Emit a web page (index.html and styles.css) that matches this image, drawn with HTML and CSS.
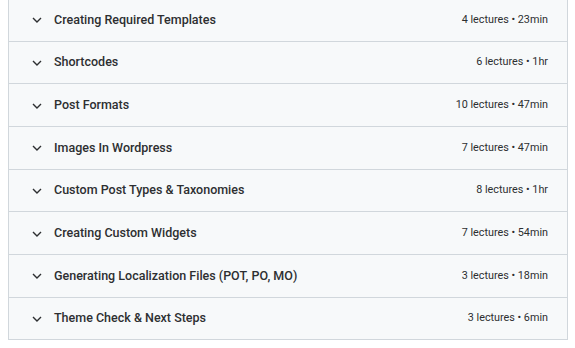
FILE: index.html
```html
<!DOCTYPE html>
<html lang="en">
<head>
    <meta charset="UTF-8">
    <meta name="viewport" content="width=device-width, initial-scale=1.0">
    <title>Course Content</title>
    <link rel="stylesheet" href="styles.css">
</head>
<body>
    <div class="curriculum">
        <div class="section">
            <div class="section-title">
                <svg class="chevron" viewBox="0 0 10 6" width="10" height="6"><path d="M1 1l4 4 4-4" fill="none" stroke="#2d2f31" stroke-width="1.4"/></svg>
                <span>Creating Required Templates</span>
            </div>
            <span class="section-meta">4 lectures • 23min</span>
        </div>
        <div class="section">
            <div class="section-title">
                <svg class="chevron" viewBox="0 0 10 6" width="10" height="6"><path d="M1 1l4 4 4-4" fill="none" stroke="#2d2f31" stroke-width="1.4"/></svg>
                <span>Shortcodes</span>
            </div>
            <span class="section-meta">6 lectures • 1hr</span>
        </div>
        <div class="section">
            <div class="section-title">
                <svg class="chevron" viewBox="0 0 10 6" width="10" height="6"><path d="M1 1l4 4 4-4" fill="none" stroke="#2d2f31" stroke-width="1.4"/></svg>
                <span>Post Formats</span>
            </div>
            <span class="section-meta">10 lectures • 47min</span>
        </div>
        <div class="section">
            <div class="section-title">
                <svg class="chevron" viewBox="0 0 10 6" width="10" height="6"><path d="M1 1l4 4 4-4" fill="none" stroke="#2d2f31" stroke-width="1.4"/></svg>
                <span>Images In Wordpress</span>
            </div>
            <span class="section-meta">7 lectures • 47min</span>
        </div>
        <div class="section">
            <div class="section-title">
                <svg class="chevron" viewBox="0 0 10 6" width="10" height="6"><path d="M1 1l4 4 4-4" fill="none" stroke="#2d2f31" stroke-width="1.4"/></svg>
                <span>Custom Post Types &amp; Taxonomies</span>
            </div>
            <span class="section-meta">8 lectures • 1hr</span>
        </div>
        <div class="section">
            <div class="section-title">
                <svg class="chevron" viewBox="0 0 10 6" width="10" height="6"><path d="M1 1l4 4 4-4" fill="none" stroke="#2d2f31" stroke-width="1.4"/></svg>
                <span>Creating Custom Widgets</span>
            </div>
            <span class="section-meta">7 lectures • 54min</span>
        </div>
        <div class="section">
            <div class="section-title">
                <svg class="chevron" viewBox="0 0 10 6" width="10" height="6"><path d="M1 1l4 4 4-4" fill="none" stroke="#2d2f31" stroke-width="1.4"/></svg>
                <span>Generating Localization Files (POT, PO, MO)</span>
            </div>
            <span class="section-meta">3 lectures • 18min</span>
        </div>
        <div class="section">
            <div class="section-title">
                <svg class="chevron" viewBox="0 0 10 6" width="10" height="6"><path d="M1 1l4 4 4-4" fill="none" stroke="#2d2f31" stroke-width="1.4"/></svg>
                <span>Theme Check &amp; Next Steps</span>
            </div>
            <span class="section-meta">3 lectures • 6min</span>
        </div>
    </div>
</body>
</html>
```

FILE: styles.css
```css
* {
    margin: 0;
    padding: 0;
    box-sizing: border-box;
}

body {
    font-family: Roboto, 'Liberation Sans', sans-serif;
    background: white;
    color: #2d2f31;
    padding: 0 8px;
}

.curriculum {
    margin-top: -2px;
    border: 1px solid #d1d7dc;
    width: 560px;
}

.section {
    display: flex;
    align-items: center;
    justify-content: space-between;
    height: 42.67px;
    padding: 0 19px 0 23px;
    background: #f7f9fa;
    border-top: 1px solid #d1d7dc;
}

.section:first-child {
    border-top: none;
    height: 41.67px;
}

.section-title {
    display: flex;
    align-items: center;
    gap: 12px;
    font-size: 12.5px;
    font-weight: 500;
    line-height: 16px;
}

.chevron {
    margin-top: 1px;
}

.section-meta {
    font-size: 10.8px;
    line-height: 14px;
}
```
